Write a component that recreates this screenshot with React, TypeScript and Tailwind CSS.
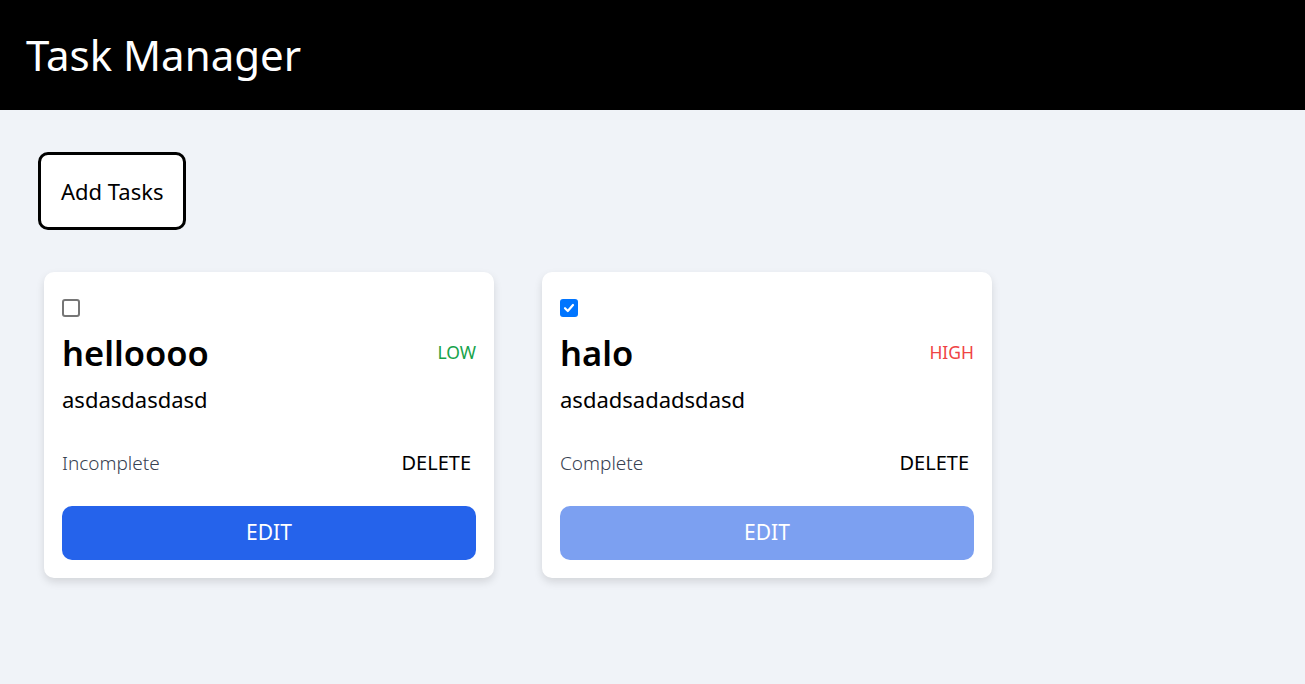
import React from "react";

type Task = { title: string; desc: string; priority: "LOW" | "HIGH"; done: boolean };

const tasks: Task[] = [
  { title: "helloooo", desc: "asdasdasdasd", priority: "LOW", done: false },
  { title: "halo", desc: "asdadsadadsdasd", priority: "HIGH", done: true },
];

function Check({ checked }: { checked: boolean }) {
  if (checked) {
    return (
      <div className="w-[18px] h-[18px] rounded-[3px] bg-[#0075ff] flex items-center justify-center">
        <svg width="12" height="12" viewBox="0 0 12 12" fill="none">
          <path d="M2 6.2 L4.8 9 L10 3" stroke="white" strokeWidth="2.2" strokeLinecap="round" strokeLinejoin="round" />
        </svg>
      </div>
    );
  }
  return <div className="w-[18px] h-[18px] rounded-[3px] border-2 border-[#767676] bg-white" />;
}

function Card({ t }: { t: Task }) {
  return (
    <div className="w-[450px] bg-white rounded-[10px] shadow-[0_4px_8px_rgba(0,0,0,0.12)] px-[18px] pt-[27px] pb-[18px]">
      <Check checked={t.done} />
      <div className="flex items-center justify-between mt-[14px] h-[44px]">
        <span className="text-[34.5px] font-semibold text-black leading-none">{t.title}</span>
        <span className={`text-[17.5px] leading-none ${t.priority === "LOW" ? "text-[#16a34a]" : "text-[#ef4444]"}`}>{t.priority}</span>
      </div>
      <div className="text-[22px] text-black mt-[8px] leading-[32px]">{t.desc}</div>
      <div className="flex items-center justify-between mt-[32px] h-[32px]">
        <span className="text-[19px] font-light text-[#374151]">{t.done ? "Complete" : "Incomplete"}</span>
        <span className="text-[20px] text-black mr-[5px]">DELETE</span>
      </div>
      <button
        className={`mt-[27px] w-full h-[54px] rounded-[10px] text-white text-[21px] ${t.done ? "bg-[#7ca0f1]" : "bg-[#2563eb]"}`}
      >
        EDIT
      </button>
    </div>
  );
}

export default function App() {
  return (
    <div className="min-h-[684px] bg-[#f0f3f8]" style={{ fontFamily: '"Noto Sans", "Open Sans", sans-serif' }}>
      <header className="h-[110px] bg-black flex items-center px-[26px]">
        <h1 className="text-[42px] text-white leading-none">Task Manager</h1>
      </header>
      <main className="px-[38px] pt-[42px]">
        <button className="h-[78px] px-[20px] border-[3px] border-black rounded-[10px] bg-white text-[22px] text-black">
          Add Tasks
        </button>
        <div className="flex gap-[48px] mt-[42px] ml-[6px]">
          {tasks.map((t) => (
            <Card key={t.title} t={t} />
          ))}
        </div>
      </main>
    </div>
  );
}
